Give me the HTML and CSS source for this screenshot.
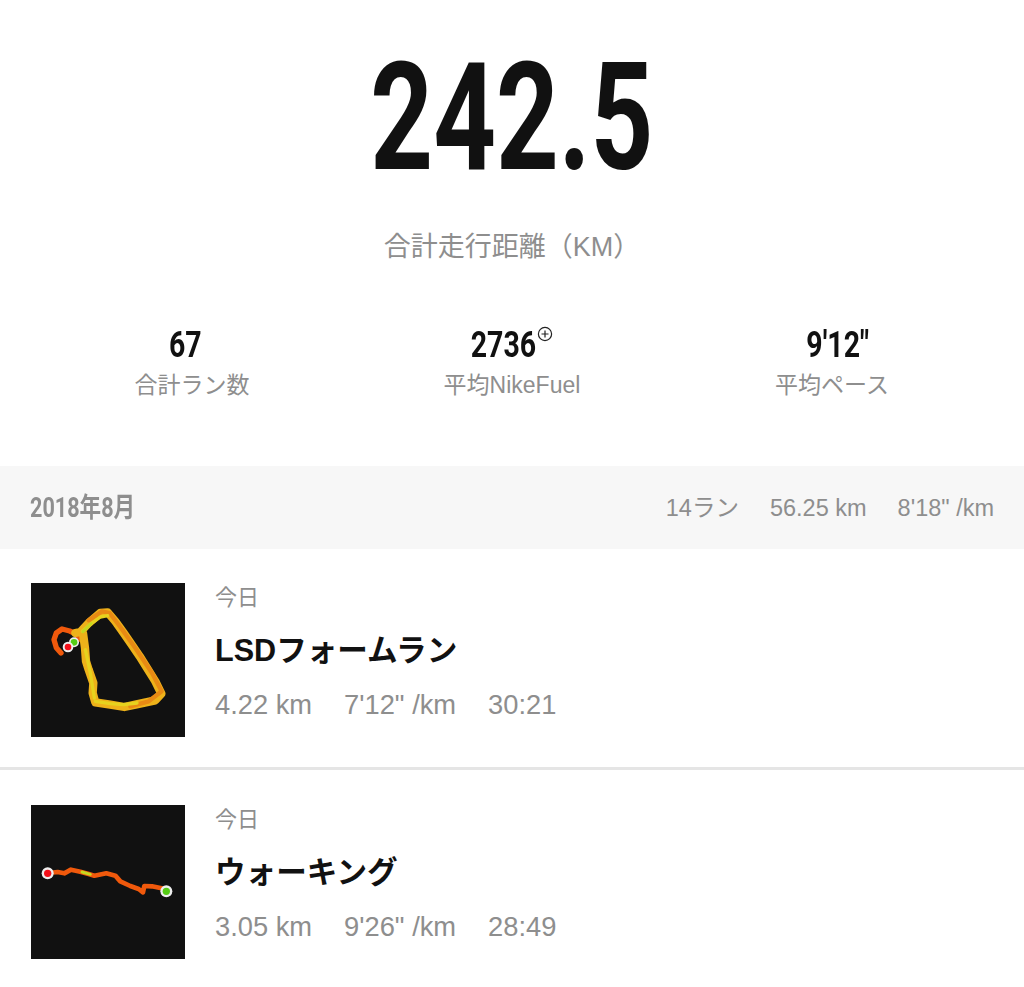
FILE: index.html
```html
<!DOCTYPE html>
<html lang="ja">
<head>
<meta charset="utf-8">
<title>Nike Run Club</title>
<link rel="stylesheet" href="styles.css">
</head>
<body>
<section class="hero">
  <div class="hero-num"><span class="cond">242.5</span></div>
  <div class="hero-label">合計走行距離（KM）</div>
</section>
<section class="stats">
  <div class="stat">
    <div class="stat-num shift-left"><span class="cond">67</span></div>
    <div class="stat-label">合計ラン数</div>
  </div>
  <div class="stat">
    <div class="stat-num shift-fuel"><span class="cond">2736</span><svg class="fuel" viewBox="0 0 16 16"><circle cx="8" cy="8" r="6.6"/><path d="M8 4.5v7M4.5 8h7"/></svg></div>
    <div class="stat-label">平均NikeFuel</div>
  </div>
  <div class="stat">
    <div class="stat-num shift-right"><span class="cond">9'12"</span></div>
    <div class="stat-label">平均ペース</div>
  </div>
</section>
<section class="month">
  <div class="month-title"><span class="cond-month">2018年8月</span></div>
  <div class="month-meta"><span>14ラン</span><span>56.25 km</span><span>8'18" /km</span></div>
</section>
<article class="run run-first">
  <svg class="map" viewBox="32 40 462 462">
    <rect x="32" y="40" width="462" height="462" fill="#111"/>
    <g class="route">
      <path class="o2 w1" d="M178 207 165 192 148 184 125 178 108 190 101 210 108 234 122 250"/>
      <path class="o2 w1" d="M170 212 178 204"/>
      <path class="y1" d="M165 190 180 187 205 160 240 130 262 128 285 155 310 190 332 222 358 260 380 295 405 335 423 372 405 392 345 405 312 412 270 405 225 398 217 370 219 340 205 300 197 275 194 235 188 190"/>
      <path class="o1" d="M205 152 245 125 268 130 300 172 345 235 395 310 424 365 385 395 330 410"/>
      <path class="y2" d="M186 185 215 160 240 142 262 138M225 395 270 402 310 405 350 400M195 240 210 310 222 385"/>
      <path class="y3" d="M188 186 212 162"/>
    </g>
    <circle class="pin-s" cx="161" cy="218" r="15"/>
    <circle class="pin-g" cx="161" cy="218" r="10"/>
    <circle class="pin-s" cx="143" cy="232" r="16"/>
    <circle class="pin-r" cx="143" cy="232" r="10"/>
  </svg>
  <div class="run-body">
    <div class="run-date">今日</div>
    <div class="run-title">LSDフォームラン</div>
    <div class="run-meta"><span>4.22 km</span><span>7'12" /km</span><span>30:21</span></div>
  </div>
</article>
<article class="run">
  <svg class="map" viewBox="32 31 462 462">
    <rect x="32" y="31" width="462" height="462" fill="#111"/>
    <g class="route thin">
      <path class="o2" d="M85 235 112 232 132 236 152 225 180 231 205 238 222 243 258 236 285 243 300 260 330 274 355 283 368 293 372 274 395 275 438 284"/>
      <path class="y3" d="M185 232 210 239"/>
    </g>
    <circle class="pin-s" cx="82" cy="236" r="18"/>
    <circle class="pin-r" cx="82" cy="236" r="11"/>
    <circle class="pin-s" cx="438" cy="290" r="18"/>
    <circle class="pin-g" cx="438" cy="290" r="11"/>
  </svg>
  <div class="run-body">
    <div class="run-date">今日</div>
    <div class="run-title">ウォーキング</div>
    <div class="run-meta"><span>3.05 km</span><span>9'26" /km</span><span>28:49</span></div>
  </div>
</article>
</body>
</html>
```
FILE: styles.css
```css
* { box-sizing: border-box; }
html, body { margin: 0; padding: 0; }
body {
  width: 1024px;
  height: 987px;
  overflow: hidden;
  background: #fff;
  font-family: "Liberation Sans", "Noto Sans CJK JP", sans-serif;
  color: #8e8e8e;
}
.cond, .cond-month {
  display: inline-block;
  font-family: Roboto, "Noto Sans CJK JP", sans-serif;
  font-weight: 700;
  transform-origin: center;
}
.cond { transform: scaleX(0.77); }
.hero { padding-top: 30px; text-align: center; }
.hero-num {
  font-size: 150px;
  line-height: 174px;
  color: #111;
}
.hero-num .cond { transform: scaleX(0.73); }
.hero-label { margin-top: 24px; font-size: 27px; line-height: 36px; }
.stats {
  display: grid;
  grid-template-columns: repeat(3, 320px);
  padding: 58px 32px 0;
  text-align: center;
}
.stat-num {
  position: relative;
  font-size: 37px;
  line-height: 44px;
  color: #111;
  display: flex;
  justify-content: center;
}
.shift-left { padding-right: 14px; }
.shift-right { padding-left: 12px; }
.shift-fuel { padding-right: 18px; }
.fuel {
  position: absolute;
  left: 185px;
  top: 3px;
  width: 16px;
  height: 16px;
  fill: none;
  stroke: #222;
  stroke-width: 1.2;
}
.stat-label { font-size: 23px; line-height: 32px; margin-top: 2px; }
.month {
  margin-top: 65px;
  height: 83px;
  background: #f7f7f7;
  display: flex;
  align-items: center;
  justify-content: space-between;
  padding: 0 30px;
}
.month-title { font-size: 27px; color: #8e8e8e; line-height: 40px; }
.cond-month { transform: scaleX(0.8); transform-origin: left center; }
.month-meta { display: flex; align-items: baseline; gap: 31px; font-size: 23.5px; line-height: 40px; }
.run {
  display: flex;
  gap: 30px;
  padding: 35px 30px 30px 31px;
  height: 222px;
}
.run-first { height: 221px; padding-top: 34px; border-bottom: 3px solid #e5e5e5; }
.map { width: 154px; height: 154px; flex: none; display: block; }
.route { fill: none; stroke-linecap: round; stroke-linejoin: round; stroke-width: 25; filter: blur(0.7px); }
.route.thin { stroke-width: 14; }
.w1 { stroke-width: 16; }
.o1 { stroke: #e88a14; stroke-width: 13; }
.o2 { stroke: #f0590c; }
.y1 { stroke: #eeb21a; }
.y2 { stroke: #e6d21e; stroke-width: 10; }
.y3 { stroke: #c6d820; stroke-width: 9; }
.pin-s { fill: #eee; }
.pin-r { fill: #f5101a; }
.pin-g { fill: #55cc14; }
.run-date { font-size: 22px; line-height: 30px; }
.run-title {
  margin-top: 17px;
  font-size: 30.6px;
  line-height: 40px;
  font-weight: 700;
  color: #111;
}
.run-meta { margin-top: 17px; display: flex; gap: 32px; font-size: 27.3px; line-height: 36px; }
```
